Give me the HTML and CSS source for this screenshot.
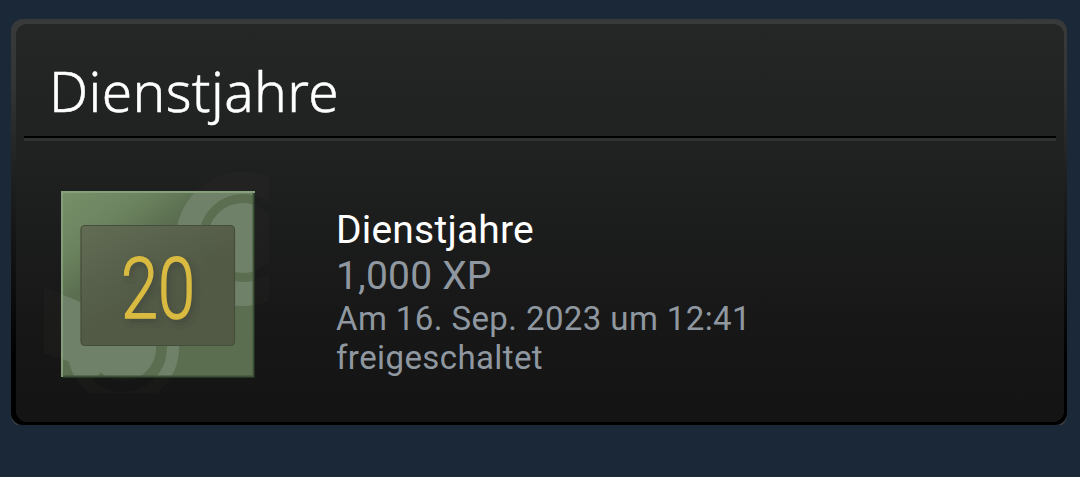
FILE: index.html
```
<!DOCTYPE html>
<html lang="de">

<head>
  <meta charset="utf-8">
  <title>Dienstjahre</title>
  <link rel="stylesheet" href="styles.css">
</head>

<body>
  <div class="badge-frame">
    <div class="badge-content">
      <h1 class="badge-title">Dienstjahre</h1>
      <div class="badge-current">
        <svg class="badge-icon" viewBox="14 10 226 224">
          <defs>
            <linearGradient id="green" gradientUnits="userSpaceOnUse" x1="31" y1="31" x2="86" y2="103">
              <stop offset="0" stop-color="#779069" />
              <stop offset=".6" stop-color="#6c835f" />
              <stop offset="1" stop-color="#5b6f50" />
            </linearGradient>
            <linearGradient id="plate" x1="0" y1="0" x2=".4" y2=".6">
              <stop offset="0" stop-color="#626b54" />
              <stop offset="1" stop-color="#515945" />
            </linearGradient>
            <mask id="gears">
              <circle cx="213" cy="79" r="67" fill="#fff" />
              <path d="M14 127 50 142 95 142V233H62L50 205 14 193Z" fill="#fff" />
              <circle cx="93" cy="188" r="56" fill="#fff" />
              <circle cx="213" cy="78" r="39.5" fill="none" stroke="#000" stroke-width="9" />
              <path d="M67 216.400A38.500 38.500 0 0 0 131.500 188V160" fill="none" stroke="#000" stroke-width="11" />
            </mask>
            <clipPath id="square">
              <rect x="31" y="31" width="193" height="186" />
            </clipPath>
            <filter id="shade" x="-20%" y="-20%" width="150%" height="150%">
              <feDropShadow dx="3" dy="4" stdDeviation="3" flood-color="#30352a" flood-opacity=".45" />
            </filter>
          </defs>
          <rect x="14" y="10" width="225" height="223" fill="#6f6257" opacity=".05" mask="url(#gears)" />
          <rect x="31" y="31" width="193" height="186" fill="url(#green)" />
          <g clip-path="url(#square)">
            <rect x="14" y="10" width="225" height="223" fill="#708169" mask="url(#gears)" />
          </g>
          <path d="M223.500 33V216.500H33" fill="none" stroke="#3b5236" stroke-width="1.800" />
          <path d="M32 217V32H225" fill="none" stroke="#87a07c" stroke-width="1.800" />
          <rect x="51" y="65.500" width="153.500" height="120" rx="4" fill="url(#plate)" fill-opacity=".96" stroke="#454d3b" stroke-width="1.200" />
          <g class="badge-years" filter="url(#shade)">
            <text x="91" y="157.500" textLength="74" lengthAdjust="spacingAndGlyphs">20</text>
          </g>
        </svg>
        <div class="badge-description">
          <div class="badge-name">Dienstjahre</div>
          <div class="badge-xp">1,000 XP</div>
          <div class="badge-unlocked">Am 16. Sep. 2023 um 12:41 freigeschaltet</div>
        </div>
      </div>
    </div>
  </div>
</body>

</html>
```

FILE: styles.css
```
body {
  margin: 0;
  padding: 19px 13px 0 11px;
  background: #1b2838;
  font-family: Roboto, sans-serif;
  color: #8f98a0;
}

.badge-frame {
  box-sizing: border-box;
  height: 406px;
  padding: 5px 3px 3px 5px;
  border-radius: 12px;
  background: linear-gradient(#383939, #343535 15%, #1f2020 38%, #000 85%);
  box-shadow: 0 2px 0 #3a3f44;
}

.badge-content {
  box-sizing: border-box;
  height: 398px;
  padding: 0 8px;
  border-radius: 11px;
  background: linear-gradient(#252726, #1e1f1f 40%, #171717 75%, #141414);
}

.badge-title {
  box-sizing: border-box;
  height: 117px;
  margin: 0;
  padding: 29px 0 0 25px;
  border-bottom: 3px solid #303131;
  box-shadow: inset 0 -2px 0 #000;
  font-family: "Noto Sans", sans-serif;
  font-size: 55px;
  font-weight: 300;
  line-height: 75px;
  letter-spacing: 0.4px;
  color: #fff;
  -webkit-text-stroke: 0.5px #fff;
}

.badge-current {
  display: flex;
  padding: 29px 0 0 20px;
}

.badge-icon {
  flex: none;
  width: 226px;
  height: 224px;
}

.badge-years {
  font-family: Roboto, sans-serif;
  font-size: 86px;
  font-weight: 300;
  fill: #dabb42;
  stroke: #dabb42;
  stroke-width: 1.5px;
}

.badge-description {
  width: 440px;
  margin: 37px 0 0 66px;
}

.badge-name {
  font-size: 39px;
  line-height: 46px;
  letter-spacing: 0.2px;
  color: #fff;
}

.badge-xp {
  padding-top: 1px;
  font-size: 39px;
  line-height: 45px;
  letter-spacing: 0.2px;
}

.badge-unlocked {
  font-size: 33px;
  line-height: 39px;
  letter-spacing: 0.4px;
}
```
